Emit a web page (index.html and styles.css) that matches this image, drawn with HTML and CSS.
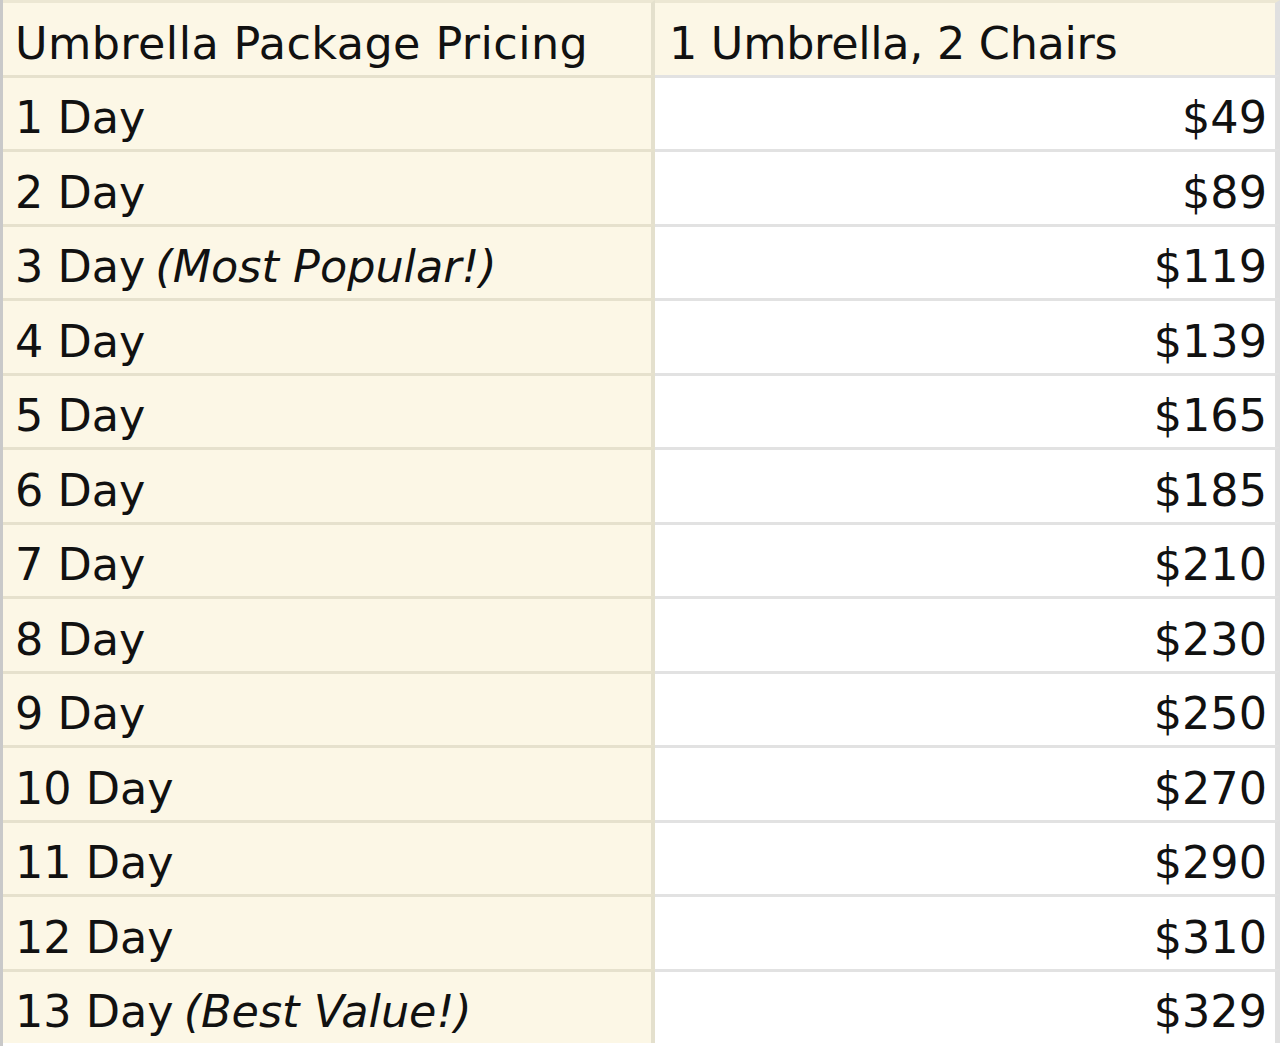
FILE: index.html
```html
<!DOCTYPE html>
<html>
<head>
<meta charset="utf-8">
<link rel="stylesheet" href="styles.css">
</head>
<body>
<div class="pricing">
  <div class="row head"><div class="cell label">Umbrella Package Pricing</div><div class="cell col">1 Umbrella, 2 Chairs</div></div>
  <div class="row"><div class="cell label">1 Day</div><div class="cell price">$49</div></div>
  <div class="row"><div class="cell label">2 Day</div><div class="cell price">$89</div></div>
  <div class="row"><div class="cell label">3 Day <em>(Most Popular!)</em></div><div class="cell price">$119</div></div>
  <div class="row"><div class="cell label">4 Day</div><div class="cell price">$139</div></div>
  <div class="row"><div class="cell label">5 Day</div><div class="cell price">$165</div></div>
  <div class="row"><div class="cell label">6 Day</div><div class="cell price">$185</div></div>
  <div class="row"><div class="cell label">7 Day</div><div class="cell price">$210</div></div>
  <div class="row"><div class="cell label">8 Day</div><div class="cell price">$230</div></div>
  <div class="row"><div class="cell label">9 Day</div><div class="cell price">$250</div></div>
  <div class="row"><div class="cell label">10 Day</div><div class="cell price">$270</div></div>
  <div class="row"><div class="cell label">11 Day</div><div class="cell price">$290</div></div>
  <div class="row"><div class="cell label">12 Day</div><div class="cell price">$310</div></div>
  <div class="row"><div class="cell label">13 Day <em>(Best Value!)</em></div><div class="cell price">$329</div></div>
</div>
</body>
</html>
```

FILE: styles.css
```css
html, body {
  margin: 0;
  padding: 0;
  background: #ffffff;
}
.pricing {
  width: 1280px;
  height: 1046px;
  box-sizing: border-box;
  border-left: 3px solid #c9c9c9;
  display: flex;
  flex-direction: column;
  font-family: "DejaVu Sans", "Noto Sans", sans-serif;
  font-size: 44.5px;
  color: #111111;
}
.row {
  display: flex;
  height: 74.5px;
  flex: 0 0 auto;
}
.cell {
  box-sizing: border-box;
  height: 100%;
  display: flex;
  align-items: center;
  padding-top: 10px;
  white-space: nowrap;
  line-height: 1;
  border-top: 3px solid #e2e2e2;
}
.label {
  width: 652px;
  padding-left: 12px;
  background: #fcf7e6;
  border-top-color: #e6e1cd;
  border-right: 4px solid #e4e0cd;
}
.head .label {
  border-top-color: #ece7d3;
  letter-spacing: 0.4px;
}
.col {
  flex: 1;
  padding-left: 14px;
  background: #fcf7e6;
  border-top-color: #ece7d3;
  border-right: 5px solid #e0e0e0;
  letter-spacing: -0.3px;
}
.price {
  flex: 1;
  justify-content: flex-end;
  padding-right: 8px;
  background: #ffffff;
  border-right: 5px solid #e0e0e0;
}
em {
  font-style: italic;
  margin-left: 10px;
}
```
